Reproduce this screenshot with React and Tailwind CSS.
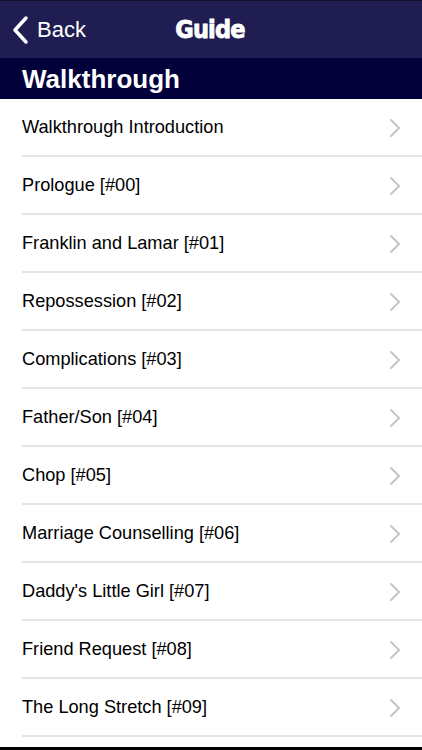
import React from "react";

const items = [
  "Walkthrough Introduction",
  "Prologue [#00]",
  "Franklin and Lamar [#01]",
  "Repossession [#02]",
  "Complications [#03]",
  "Father/Son [#04]",
  "Chop [#05]",
  "Marriage Counselling [#06]",
  "Daddy's Little Girl [#07]",
  "Friend Request [#08]",
  "The Long Stretch [#09]",
];

function Chevron() {
  return (
    <svg width="12" height="20" viewBox="0 0 12 20" className="shrink-0">
      <path d="M2 2 L10 10 L2 18" fill="none" stroke="#c4c4c9" strokeWidth="2" strokeLinecap="round" strokeLinejoin="round" />
    </svg>
  );
}

export default function App() {
  return (
    <div className="w-[422px] h-[750px] overflow-hidden bg-white flex flex-col" style={{ fontFamily: '"Liberation Sans", Arial, sans-serif' }}>
      {/* nav bar */}
      <div className="h-[58px] bg-[#1f1d51] border-t border-[#111033] relative flex items-center shrink-0">
        <div className="flex items-center pl-[11px] gap-[8px] text-white">
          <svg width="18" height="30" viewBox="0 0 18 30">
            <path d="M15 3 L4 15 L15 27" fill="none" stroke="white" strokeWidth="3.5" strokeLinecap="round" strokeLinejoin="round" />
          </svg>
          <span className="text-[22px] leading-none">Back</span>
        </div>
        <div className="absolute inset-0 flex items-center justify-center pointer-events-none">
          <span className="text-white text-[25px] font-bold leading-none tracking-[-0.8px] ml-[-2px]" style={{ fontFamily: '"DejaVu Sans Condensed", "DejaVu Sans", sans-serif', WebkitTextStroke: "0.8px white" }}>
            Guide
          </span>
        </div>
      </div>

      {/* section header */}
      <div className="h-[41px] bg-[#03013a] flex items-center pl-[22px] shrink-0">
        <span className="text-white text-[26px] font-bold leading-none">Walkthrough</span>
      </div>

      {/* list */}
      <div className="flex-1 flex flex-col">
        {items.map((t) => (
          <div key={t} className="h-[58px] shrink-0 pl-[22px] flex">
            <div className="flex-1 flex items-center justify-between pr-[21px] pt-[1px] border-b-2 border-[#e4e4e6]">
              <span className="text-[18.2px] text-black leading-none">{t}</span>
              <Chevron />
            </div>
          </div>
        ))}
      </div>
      <div className="h-[3px] bg-black shrink-0" />
    </div>
  );
}
